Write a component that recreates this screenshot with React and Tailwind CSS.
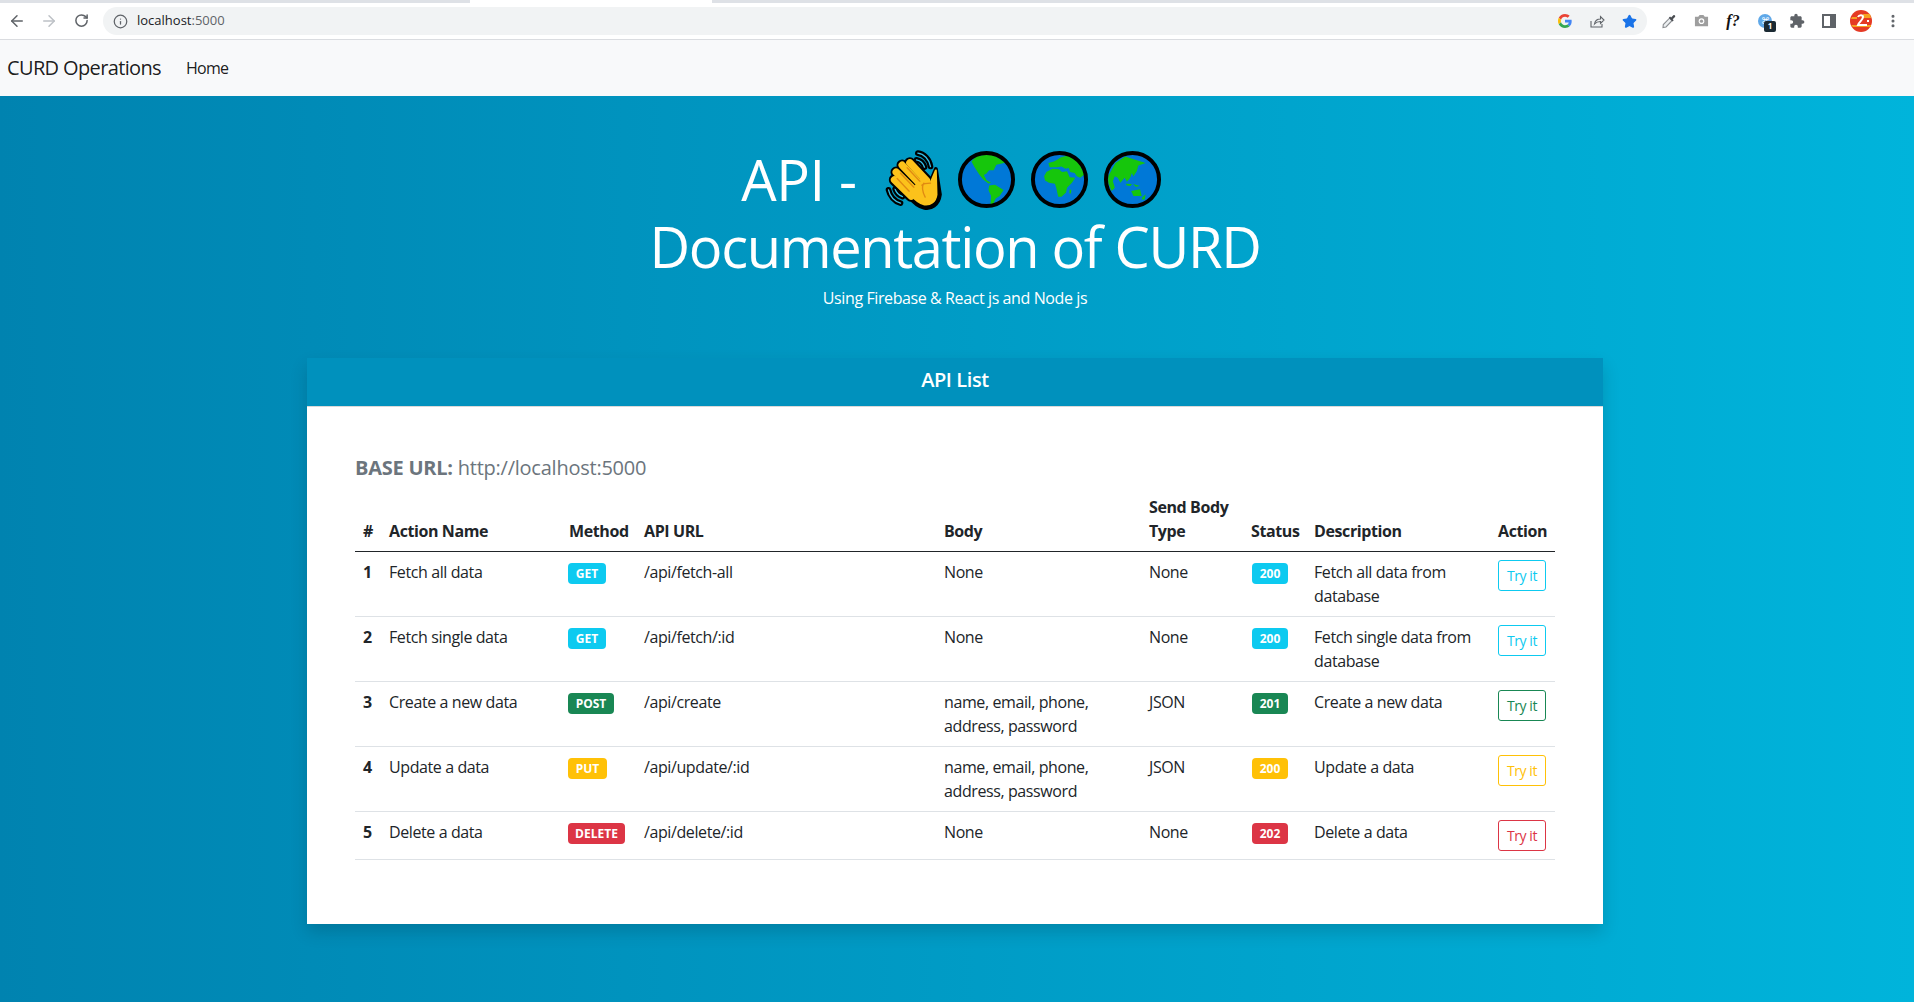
import React from "react";
import { ArrowLeft, ArrowRight, RotateCw, Info, Star, EllipsisVertical } from "lucide-react";

const rows = [
  { n: 1, name: "Fetch all data", m: "GET", mc: "bg-[#0dcaf0] w-[38px]", url: "/api/fetch-all", body: "None", type: "None", st: "200", sc: "bg-[#0dcaf0]", desc: "Fetch all data from database", btn: "border-[#0dcaf0] text-[#0dcaf0]" },
  { n: 2, name: "Fetch single data", m: "GET", mc: "bg-[#0dcaf0] w-[38px]", url: "/api/fetch/:id", body: "None", type: "None", st: "200", sc: "bg-[#0dcaf0]", desc: "Fetch single data from database", btn: "border-[#0dcaf0] text-[#0dcaf0]" },
  { n: 3, name: "Create a new data", m: "POST", mc: "bg-[#198754] w-[46px]", url: "/api/create", body: "name, email, phone, address, password", type: "JSON", st: "201", sc: "bg-[#198754]", desc: "Create a new data", btn: "border-[#198754] text-[#198754]" },
  { n: 4, name: "Update a data", m: "PUT", mc: "bg-[#ffc107] w-[39px]", url: "/api/update/:id", body: "name, email, phone, address, password", type: "JSON", st: "200", sc: "bg-[#ffc107]", desc: "Update a data", btn: "border-[#ffc107] text-[#ffc107]" },
  { n: 5, name: "Delete a data", m: "DELETE", mc: "bg-[#dc3545] w-[57px]", url: "/api/delete/:id", body: "None", type: "None", st: "202", sc: "bg-[#dc3545]", desc: "Delete a data", btn: "border-[#dc3545] text-[#dc3545]" },
];

function Hand() {
  const fingers = ["M88 55L138 108", "M65 62L120 120", "M47 83L105 140", "M42 106L92 155"];
  return (
    <svg viewBox="0 0 219 219" className="w-[73px] h-[73px]">
      <g transform="translate(10.5 4.5)" fill="none" strokeLinecap="round" strokeLinejoin="round">
        <path d="M112 26C130 28 146 44 150 66M108 46C118 48 128 56 132 68M24 136C28 154 42 170 60 176M44 134C48 146 54 152 66 156" stroke="#000" strokeWidth="17" />
        <path d="M112 26C130 28 146 44 150 66M108 46C118 48 128 56 132 68M24 136C28 154 42 170 60 176M44 134C48 146 54 152 66 156" stroke="#35c0e8" strokeWidth="4" />
        {fingers.map((d) => <path key={d} d={d} stroke="#000" strokeWidth="34" />)}
        <path d="M166 74L178 150C174 182 150 194 132 190C112 186 96 170 84 154L120 100L150 112Z" fill="#000" stroke="#000" strokeWidth="12" />
        {fingers.map((d) => <path key={d + "y"} d={d} stroke="#fcc21b" strokeWidth="22" />)}
        <path d="M166 78L168 150C165 172 150 182 132 180C114 176 100 162 88 148L122 102L150 116Z" fill="#fcc21b" stroke="#fcc21b" strokeWidth="6" />
        <path d="M80 70L118 110M60 86L100 128M50 102L86 140M130 116C122 128 128 146 134 158M150 116C136 116 130 116 124 122" stroke="#e08a12" strokeWidth="4" />
      </g>
    </svg>
  );
}

function Globe({ children, id }) {
  return (
    <span className="inline-flex w-[73px] h-[73px] items-center justify-center">
      <svg viewBox="0 0 180 180" className="w-[59px] h-[59px]">
        <defs>
          <clipPath id={id}><circle cx="90" cy="90" r="80" /></clipPath>
        </defs>
        <circle cx="90" cy="90" r="80" fill="#0078d7" />
        <g clipPath={`url(#${id})`} fill="#16c60c">{children}</g>
        <circle cx="90" cy="90" r="81" fill="none" stroke="#000" strokeWidth="12" />
      </svg>
    </span>
  );
}

function GoogleG() {
  return (
    <svg viewBox="0 0 48 48" className="w-[14px] h-[14px]">
      <path fill="#EA4335" d="M24 9.5c3.5 0 6.7 1.3 9.1 3.5l6.8-6.8C35.800 2.400 30.300 0 24 0 14.600 0 6.500 5.400 2.600 13.200l7.900 6.200C12.400 13.700 17.700 9.500 24 9.500z" />
      <path fill="#4285F4" d="M46.900 24.500c0-1.600-.1-3.100-.4-4.500H24v9h12.900c-.6 3-2.200 5.400-4.700 7.100l7.700 6c4.500-4.200 7-10.300 7-17.600z" />
      <path fill="#FBBC05" d="M10.500 28.600c-.5-1.400-.8-3-.8-4.600s.3-3.100.8-4.600l-7.900-6.200C.900 16.500 0 20.100 0 24s.9 7.500 2.600 10.800l7.900-6.200z" />
      <path fill="#34A853" d="M24 48c6.500 0 11.900-2.100 15.900-5.800l-7.700-6c-2.200 1.400-4.900 2.300-8.200 2.300-6.300 0-11.600-4.200-13.500-9.900l-7.900 6.200C6.500 42.600 14.600 48 24 48z" />
    </svg>
  );
}

function Cell({ children }) {
  return <span className="w-[32px] h-[32px] flex items-center justify-center shrink-0 relative">{children}</span>;
}

export default function App() {
  return (
    <div className="min-h-screen flex flex-col font-['Open_Sans',sans-serif] text-[16px] text-[#212529] tracking-[-0.025em]">
      <div className="h-[3px] bg-[#dee1e6] flex">
        <div className="w-[470px]" />
        <div className="w-[242px] bg-white" />
      </div>
      <div className="h-[37px] bg-white border-b border-[#dadce0] flex items-center pl-px pr-[5px] pb-px">
        <Cell><ArrowLeft size={18} color="#5f6368" strokeWidth={2} /></Cell>
        <Cell><ArrowRight size={18} color="#bdc1c6" strokeWidth={2} /></Cell>
        <Cell><RotateCw size={15} color="#5f6368" strokeWidth={2.4} /></Cell>
        <div className="ml-[6px] mt-[1px] flex-1 h-[28px] rounded-full bg-[#f1f3f4] flex items-center pl-[10px] pr-[2px]">
          <Info size={15} color="#5f6368" strokeWidth={2} />
          <span className="ml-[9px] text-[13px] tracking-normal text-[#202124]">localhost<span className="text-[#5f6368]">:5000</span></span>
          <div className="flex-1" />
          <Cell><GoogleG /></Cell>
          <Cell>
            <svg viewBox="0 0 16 16" className="w-[16px] h-[16px]" fill="none" stroke="#5f6368" strokeWidth="1.1">
              <path d="M2 8v6h11v-3M5.500 11c.5-3 3-5 6-5V3.500L15 7l-3.500 3.500V8.500c-2.500 0-4.500.8-6 2.500z" />
            </svg>
          </Cell>
          <Cell><Star size={15} color="#1a73e8" fill="#1a73e8" /></Cell>
        </div>
        <div className="ml-[6px] flex items-center">
          <Cell>
            <svg viewBox="0 0 16 16" className="w-[16px] h-[16px]">
              <path d="M2 14.500L2.300 11.500 8.500 5.200l2.500 2.500-6 6.300z" fill="#eceff1" stroke="#8a8d91" strokeWidth="1.1" />
              <path d="M7.800 4.700l3.700 3.700 1.200-1.200-1-1 2.300-2.300c.9-1-.6-2.500-1.600-1.600l-2.300 2.300-1-1z" fill="#4a4d52" />
            </svg>
          </Cell>
          <Cell>
            <svg viewBox="0 0 16 16" className="w-[15px] h-[15px]">
              <path d="M1 4h3.500L6 2h4l1.500 2H15v10H1z" fill="#9e9e9e" />
              <circle cx="8" cy="8.700" r="3" fill="#fff" />
              <circle cx="8" cy="8.700" r="1.700" fill="#9e9e9e" />
            </svg>
          </Cell>
          <Cell><span className="font-['Liberation_Serif',serif] italic font-bold text-[16px] text-[#111] tracking-normal">f?</span></Cell>
          <Cell>
            <span className="w-[14px] h-[14px] rounded-full bg-[#5fa8e8] text-white text-[9px] flex items-center justify-center tracking-normal">⌘</span>
            <span className="absolute left-[15px] top-[16px] w-[12px] h-[11px] rounded-[2px] bg-[#1b2a33] text-white text-[8px] font-bold flex items-center justify-center tracking-normal">1</span>
          </Cell>
          <Cell>
            <svg viewBox="0 0 24 24" className="w-[16px] h-[16px]" fill="#5f6368">
              <path d="M20.500 11H19V7c0-1.100-.9-2-2-2h-4V3.500C13 2.120 11.880 1 10.500 1S8 2.120 8 3.500V5H4c-1.100 0-1.990.9-1.990 2v3.800H3.500c1.490 0 2.700 1.210 2.700 2.700s-1.210 2.700-2.700 2.700H2V20c0 1.100.9 2 2 2h3.800v-1.500c0-1.490 1.210-2.700 2.700-2.700 1.490 0 2.700 1.210 2.700 2.700V22H17c1.100 0 2-.9 2-2v-4h1.500c1.380 0 2.500-1.120 2.500-2.500S21.880 11 20.500 11z" />
            </svg>
          </Cell>
          <Cell>
            <span className="w-[14px] h-[14px] border-[2px] border-r-[6px] border-[#5f6368] bg-white" />
          </Cell>
          <Cell>
            <svg viewBox="0 0 22 22" className="w-[22px] h-[22px]">
              <circle cx="11" cy="11" r="11" fill="#e53a25" />
              <path d="M1 15h20v2H3zM13 4h7l1 4h-8zM2 7h5v2H1z" fill="#f6a022" />
              <path d="M8 7c1-2.500 5-2.500 5 0 0 3-4 5-5 8h9M17 11h2" fill="none" stroke="#fff" strokeWidth="2" />
            </svg>
          </Cell>
          <Cell><EllipsisVertical size={16} color="#5f6368" strokeWidth={2.6} /></Cell>
        </div>
      </div>

      <nav className="h-[56px] bg-[#f8f9fa] flex items-center pl-[7px] text-black/90">
        <span className="text-[20px] tracking-[-0.032em]">CURD Operations</span>
        <span className="ml-[25px] tracking-[-0.045em]">Home</span>
      </nav>

      <main className="flex-1 bg-[linear-gradient(to_right,#0083b0,#00b4db)] flex flex-col items-center pt-[50px] pb-[76px] pr-[4px]">
        <h1 className="text-[56px] leading-[67px] font-[380] text-white text-center">
          <span className="flex items-center justify-center h-[67px]">
            <span className="mr-[6px]">API -&nbsp;</span>
            <Hand />
            <Globe id="g1">
              <path d="M44 35L60 18 105 12 150 38 120 45 112 62 98 62 90 72 82 76 90 92 104 100 96 102 80 90 68 75 55 55z" />
              <path d="M98 108L116 106 142 122 130 140 118 148 108 170 102 168 104 140 96 122z" />
            </Globe>
            <Globe id="g2">
              <path d="M43 80L50 67 68 57 88 59 98 67 113 65 121 83 138 85 128 100 113 115 110 130 96 143 86 143 80 115 76 103 58 100 46 93z" />
              <path d="M103 20L128 15 148 35 166 75 153 85 143 80 136 70 123 67 118 55 108 57 96 50 83 53 60 53 56 40 73 35 83 30 93 23z" />
              <path d="M121 120L126 122 125 133 120 132z" />
            </Globe>
            <Globe id="g3">
              <path d="M16 80L38 40 68 20 98 30 130 40 108 47 103 65 93 80 88 70 83 85 73 97 66 85 53 100 45 85 36 80 30 95 36 115 26 125 16 100z" />
              <path d="M70 103L88 104 84 110 72 108zM92 104L113 110 100 112z" />
              <path d="M86 125L113 120 118 140 93 140z" />
              <path d="M120 145L130 135 127 152 118 150z" />
            </Globe>
          </span>
          <span className="block h-[67px] tracking-[-1.35px]">Documentation of CURD</span>
        </h1>
        <p className="mt-[6px] text-white leading-[24px]">Using Firebase &amp; React js and Node js</p>

        <section className="mt-[48px] w-[1296px] bg-white shadow-[0_8px_16px_rgba(0,0,0,0.15)]">
          <div className="h-[49px] pb-[4px] bg-[#0091bd] border-b border-[#d9d9d9] flex items-center justify-center text-white text-[20px] font-semibold">API List</div>
          <div className="p-[48px]">
            <h5 className="mt-px text-[20px] leading-[24px] font-medium text-[#6c757d] mb-[7px] tracking-[-0.012em]"><strong className="font-bold">BASE URL:</strong> http://localhost:5000</h5>
            <table className="w-[1200px] table-fixed border-collapse leading-[24px] mb-[16px]">
              <colgroup>
                <col className="w-[26px]" />
                <col className="w-[180px]" />
                <col className="w-[75px]" />
                <col className="w-[300px]" />
                <col className="w-[205px]" />
                <col className="w-[102px]" />
                <col className="w-[63px]" />
                <col className="w-[184px]" />
                <col className="w-[65px]" />
              </colgroup>
              <thead>
                <tr className="border-b border-[#212529] text-left align-bottom">
                  {["#", "Action Name", "Method", "API URL", "Body"].map((h) => (
                    <th key={h} className="p-2 font-bold whitespace-nowrap">{h}</th>
                  ))}
                  <th className="p-2 font-bold">Send Body<br />Type</th>
                  {["Status", "Description", "Action"].map((h) => (
                    <th key={h} className="p-2 font-bold whitespace-nowrap">{h}</th>
                  ))}
                </tr>
              </thead>
              <tbody>
                {rows.map((r) => (
                  <tr key={r.n} className="border-b border-[#dee2e6] align-top">
                    <th className="p-2 font-bold text-left">{r.n}</th>
                    <td className="p-2 whitespace-nowrap">{r.name}</td>
                    <td className="p-2">
                      <span className={`-ml-px mt-[3px] h-[21px] flex items-center justify-center rounded-[4px] text-white text-[12px] font-bold tracking-normal ${r.mc}`}>{r.m}</span>
                    </td>
                    <td className="p-2">{r.url}</td>
                    <td className="p-2">{r.body}</td>
                    <td className="p-2">{r.type}</td>
                    <td className="p-2">
                      <span className={`ml-px mt-[3px] w-[36px] h-[21px] flex items-center justify-center rounded-[4px] text-white text-[12px] font-bold tracking-normal ${r.sc}`}>{r.st}</span>
                    </td>
                    <td className="p-2">{r.desc}</td>
                    <td className="p-2">
                      <button className={`w-[48px] h-[31px] border rounded-[3px] text-[14px] flex items-center justify-center bg-transparent ${r.btn}`}>Try it</button>
                    </td>
                  </tr>
                ))}
              </tbody>
            </table>
          </div>
        </section>
      </main>
    </div>
  );
}
